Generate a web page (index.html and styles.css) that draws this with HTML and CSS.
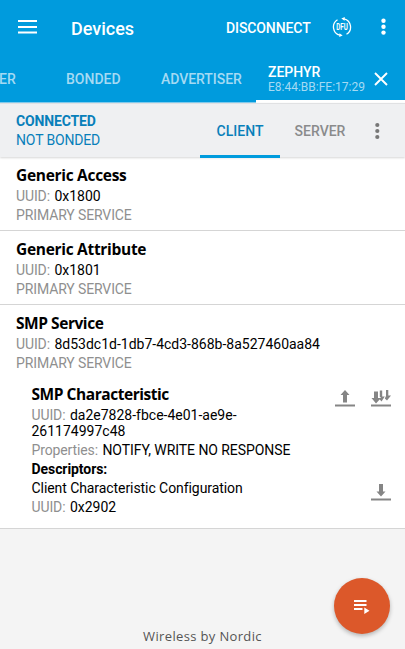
FILE: index.html
```html
<!DOCTYPE html>
<html lang="en">
<head>
<meta charset="utf-8">
<title>Devices</title>
<link rel="stylesheet" href="styles.css">
</head>
<body>
<header class="appbar">
  <div class="toolbar">
    <svg class="menu" width="20" height="14" viewBox="0 0 20 14"><path d="M0 1H19M0 7H19M0 12.500H19" stroke="#fff" stroke-width="2"/></svg>
    <h1 class="title">Devices</h1>
    <span class="disconnect">DISCONNECT</span>
    <svg class="dfu" width="20" height="20" viewBox="0 0 20 20">
      <path d="M8 18.200A8.500 8.500 0 0 1 5.500 2.700M12 1.800A8.500 8.500 0 0 1 14.500 17.300" fill="none" stroke="#fff" stroke-width="1.300"/>
      <path d="M12.800 0 9.300 1.600 12.500 3.700ZM7.200 20 10.700 18.400 7.500 16.300Z" fill="#fff"/>
      <text x="10" y="13" text-anchor="middle" textLength="11.500" lengthAdjust="spacingAndGlyphs" class="dfu-text">DFU</text>
    </svg>
    <svg class="more" width="6" height="18" viewBox="0 0 6 18" fill="#fff"><circle cx="2.500" cy="2.800" r="2.200"/><circle cx="2.500" cy="8.800" r="2.200"/><circle cx="2.500" cy="14.600" r="2.200"/></svg>
  </div>
  <nav class="tabs">
    <span class="tab scanner">ER</span>
    <span class="tab bonded">BONDED</span>
    <span class="tab advertiser">ADVERTISER</span>
    <div class="tab device">
      <div class="device-text"><div class="device-name">ZEPHYR</div><div class="device-mac">E8:44:BB:FE:17:29</div></div>
      <svg width="14" height="14" viewBox="0 0 14 14"><path d="M1 1 13 13M13 1 1 13" stroke="#fff" stroke-width="1.900"/></svg>
    </div>
  </nav>
</header>
<section class="status">
  <div class="state"><b>CONNECTED</b><span>NOT BONDED</span></div>
  <span class="role active">CLIENT</span>
  <span class="role">SERVER</span>
  <svg class="status-more" width="6" height="18" viewBox="0 0 6 18" fill="#777"><circle cx="3.300" cy="3" r="2.100"/><circle cx="3.300" cy="9" r="2.100"/><circle cx="3.300" cy="15" r="2.100"/></svg>
</section>
<main>
  <article class="service">
    <h2>Generic Access</h2>
    <p><i>UUID:</i> 0x1800</p>
    <p><i>PRIMARY SERVICE</i></p>
  </article>
  <article class="service">
    <h2>Generic Attribute</h2>
    <p><i>UUID:</i> 0x1801</p>
    <p><i>PRIMARY SERVICE</i></p>
  </article>
  <article class="service last">
    <h2 class="tight">SMP Service</h2>
    <p><i>UUID:</i> 8d53dc1d-1db7-4cd3-868b-8a527460aa84</p>
    <p><i>PRIMARY SERVICE</i></p>
    <div class="characteristic">
      <div class="info">
        <h2 class="tight">SMP Characteristic</h2>
        <p class="uuid"><i>UUID:</i> da2e7828-fbce-4e01-ae9e-<br>261174997c48</p>
        <p class="props"><i>Properties:</i> NOTIFY, WRITE NO RESPONSE</p>
        <p class="descriptors"><b>Descriptors:</b></p>
        <p class="descriptor-name">Client Characteristic Configuration</p>
        <p><i>UUID:</i> 0x2902</p>
      </div>
      <div class="actions">
        <svg width="20" height="17" viewBox="0 0 20 17" fill="#858585"><path d="M10 0 14.500 5H12V12.500H8V5H5.500ZM0 14.500H20V16.500H0Z"/></svg>
        <svg width="20" height="17" viewBox="0 0 20 17" fill="#858585"><path d="M3 1.500H7V8H10L5 13.500 0.500 8H3ZM8.800 .500H11.200V6.500H13.800L10.500 11.500 8.800 9.500 9.800 7H8.800ZM15 0H17.300V5.500H20L16 10.500 13.800 8.500 15 6ZM0 14.500H20V16.500H0Z"/></svg>
        <svg class="read" width="20" height="17" viewBox="0 0 20 17" fill="#858585"><path d="M8 0H12V7.500H14.500L10 12.500 5.500 7.500H8ZM0 14.500H20V16.500H0Z"/></svg>
      </div>
    </div>
  </article>
</main>
<footer>Wireless by Nordic</footer>
<button class="fab" aria-label="Macros"><svg width="16" height="15" viewBox="0 0 16 15" fill="#fff"><path d="M0 1H12.500V3H0ZM0 5H12.500V7H0ZM0 9H8.500V11H0ZM10.300 8.500 15.500 11.700 10.300 15Z"/></svg></button>
</body>
</html>
```
FILE: styles.css
```css
* { box-sizing: border-box; }
body {
  margin: 0;
  height: 649px;
  display: flex;
  flex-direction: column;
  overflow: hidden;
  background: #f4f4f4;
  color: #000;
  font: 14px Roboto, sans-serif;
}
h1, h2, p { margin: 0; }
i { font-style: normal; color: #8f8f8f; letter-spacing: -0.12px; margin-right: 1px; }
svg { display: block; flex: none; }

.appbar { height: 103px; background: #009bdd; color: #fff; }
.toolbar { height: 56px; display: flex; align-items: center; padding: 0 18px; }
.title { width: 155px; margin-left: 33px; padding-top: 1px; font-size: 18px; font-weight: 500; line-height: 20px; }
.disconnect { width: 106px; font-weight: 500; letter-spacing: -0.1px; white-space: nowrap; }
.menu, .dfu, .more { position: relative; top: -1px; }
.more { margin-left: auto; }
.dfu-text { font: 700 8.5px Roboto, sans-serif; fill: #fff; }

.tabs { height: 47px; display: flex; }
.tab { height: 47px; line-height: 47px; font-weight: 500; color: #a5daf3; border-bottom: 1px solid #7bcaee; white-space: nowrap; }
.scanner { width: 66px; margin-left: -1px; }
.bonded { width: 96px; padding-left: 1px; }
.advertiser { width: 95px; letter-spacing: -0.05px; }
.device { width: 149px; display: flex; align-items: center; padding: 1px 0 0 12px; border-bottom: 3px solid #fff; line-height: 14px; }
.device-text { width: 106px; padding-top: 2px; }
.device-name { color: #fff; line-height: 15px; }
.device-mac { font-size: 12px; font-weight: 400; }

.status { height: 54px; display: flex; align-items: center; background: #eff0f2; border-top: 1px solid #e0e1e3; box-shadow: 0 1px 2px #d6d6d6; position: relative; z-index: 1; }
.state { width: 200px; padding: 1px 0 0 16px; color: #087fba; line-height: 19px; letter-spacing: -0.15px; }
.state b, .state span { display: block; }
.role { width: 80px; height: 54px; line-height: 55px; text-align: center; font-weight: 500; color: #8a8b8c; }
.role.active { color: #087fba; border-bottom: 3px solid #009bdd; }
.status-more { margin-left: 14px; }

.service { height: 74px; padding: 8px 16px 0; background: #fff; border-bottom: 1px solid #d5d5d5; line-height: 19px; }
.service h2 { font: 700 15.5px/20px "Open Sans", sans-serif; letter-spacing: -0.3px; padding-bottom: 2px; }
.service h2.tight { letter-spacing: -0.45px; }
.last { height: 224px; }
.characteristic { display: flex; justify-content: space-between; padding: 11px 0 0 15.5px; }
.characteristic .uuid { line-height: 16px; padding: 1px 0 2px; }
.props, .descriptors, .descriptor-name { letter-spacing: -0.07px; }
.actions { display: grid; grid-template-columns: 20px 20px; column-gap: 16px; row-gap: 77px; align-content: start; padding-top: 6px; margin-right: -2px; }
.read { grid-column: 2; }

footer { margin-top: auto; padding-bottom: 3px; text-align: center; font: 13px/20px "Open Sans", sans-serif; letter-spacing: 0.35px; color: #555; }
.fab { position: absolute; left: 334px; top: 578px; width: 56px; height: 56px; padding: 0; border: 0; border-radius: 50%; background: #dc582a; box-shadow: 0 2px 4px #0004; display: grid; place-items: center; }
```
